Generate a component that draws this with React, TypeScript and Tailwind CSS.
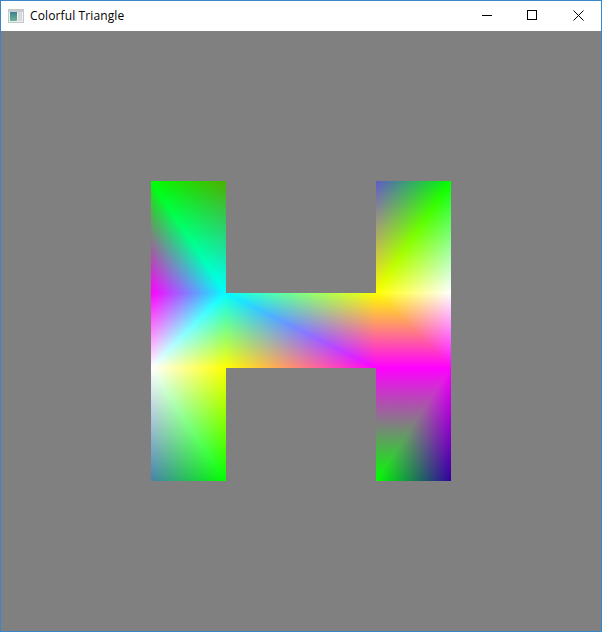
type V = { x: number; y: number; c: string };

const v = (x: number, y: number, c: string): V => ({ x, y, c });

const MAGENTA = "#ff00ff";
const CYAN = "#00ffff";
const YELLOW = "#ffff00";
const GREEN = "#00ff00";
const WHITE = "#ffffff";

// vertex coloured triangles, coordinates are relative to the H box
const triangles: V[][] = [
  // left top
  [v(0, 0, GREEN), v(75, 0, "#4bb000"), v(75, 112, CYAN)],
  [v(0, 0, GREEN), v(75, 112, CYAN), v(0, 112, MAGENTA)],
  // left middle
  [v(0, 112, MAGENTA), v(75, 112, CYAN), v(0, 187, WHITE)],
  [v(75, 112, CYAN), v(75, 187, YELLOW), v(0, 187, WHITE)],
  // left bottom
  [v(0, 187, WHITE), v(75, 187, YELLOW), v(75, 300, GREEN)],
  [v(0, 187, WHITE), v(75, 300, GREEN), v(0, 300, "#4682aa")],
  // bar
  [v(75, 112, CYAN), v(225, 112, YELLOW), v(225, 187, MAGENTA)],
  [v(75, 112, CYAN), v(225, 187, MAGENTA), v(75, 187, YELLOW)],
  // right middle
  [v(225, 112, YELLOW), v(300, 112, WHITE), v(300, 187, MAGENTA)],
  [v(225, 112, YELLOW), v(300, 187, MAGENTA), v(225, 187, MAGENTA)],
  // right top
  [v(225, 0, "#5f5ac8"), v(300, 0, GREEN), v(225, 112, YELLOW)],
  [v(300, 0, GREEN), v(300, 112, WHITE), v(225, 112, YELLOW)],
  // right bottom
  [v(225, 187, MAGENTA), v(300, 187, MAGENTA), v(225, 300, GREEN)],
  [v(300, 187, MAGENTA), v(300, 300, "#3200a0"), v(225, 300, GREEN)],
];

// gradient running from a vertex (full colour) to the foot on the opposite edge (black)
const foot = (p: V, a: V, b: V) => {
  const dx = b.x - a.x;
  const dy = b.y - a.y;
  const t = ((p.x - a.x) * dx + (p.y - a.y) * dy) / (dx * dx + dy * dy);
  return { x: a.x + t * dx, y: a.y + t * dy };
};

const ColoredH = () => {
  return (
    <svg width="300" height="300" viewBox="0 0 300 300" className="block isolate">
      <defs>
        {triangles.map((tri, i) =>
          tri.map((p, j) => {
            const f = foot(p, tri[(j + 1) % 3], tri[(j + 2) % 3]);
            return (
              <linearGradient
                key={`${i}-${j}`}
                id={`g${i}-${j}`}
                gradientUnits="userSpaceOnUse"
                x1={p.x}
                y1={p.y}
                x2={f.x}
                y2={f.y}
              >
                <stop offset="0" stopColor={p.c} />
                <stop offset="1" stopColor="#000000" />
              </linearGradient>
            );
          })
        )}
      </defs>
      {triangles.map((tri, i) =>
        tri.map((_, j) => (
          <polygon
            key={`${i}-${j}`}
            points={tri.map((q) => `${q.x},${q.y}`).join(" ")}
            fill={`url(#g${i}-${j})`}
            className="mix-blend-plus-lighter"
          />
        ))
      )}
    </svg>
  );
};

const AppIcon = () => {
  return (
    <svg width="16" height="16" viewBox="0 0 16 16" className="block">
      <defs>
        <linearGradient id="appIconFill" x1="0" y1="0" x2="0" y2="1">
          <stop offset="0" stopColor="#3d7f8c" />
          <stop offset="1" stopColor="#6fb596" />
        </linearGradient>
      </defs>
      <rect x="0.5" y="1.5" width="15" height="13" fill="#eef0f0" stroke="#c3c8ca" />
      <rect x="1" y="2" width="14" height="2" fill="#c6ccd0" />
      <rect x="2" y="4" width="7" height="9" fill="url(#appIconFill)" />
      <rect x="10" y="4" width="4" height="9" fill="#d5dadb" />
    </svg>
  );
};

const App = () => {
  return (
    <div className="w-[602px] h-[632px] flex flex-col border border-[#3a86c8] bg-white overflow-hidden">
      <div className="h-[30px] flex items-center justify-between bg-white shrink-0">
        <div className="flex items-center">
          <div className="ml-[7px]">
            <AppIcon />
          </div>
          <span className="ml-[6px] text-[12px] tracking-[0.12px] text-black font-['Open_Sans',sans-serif]">
            Colorful Triangle
          </span>
        </div>
        <div className="flex">
          <div className="w-[42px] h-[30px] flex items-start justify-center pt-[9px]">
            <svg width="10" height="10" viewBox="0 0 10 10">
              <path d="M0 5.5H10" stroke="#000" fill="none" />
            </svg>
          </div>
          <div className="w-[48px] h-[30px] flex items-start justify-center pt-[9px]">
            <svg width="10" height="10" viewBox="0 0 10 10">
              <rect x="0.5" y="0.5" width="9" height="9" stroke="#000" fill="none" />
            </svg>
          </div>
          <div className="w-[45px] h-[30px] flex items-start justify-center pt-[9px]">
            <svg width="11" height="11" viewBox="0 0 11 11">
              <path d="M0.5 0.5L10.5 10.5M10.5 0.5L0.5 10.5" stroke="#000" fill="none" />
            </svg>
          </div>
        </div>
      </div>
      <div className="flex-1 bg-[#808080] pl-[150px] pt-[150px]">
        <ColoredH />
      </div>
    </div>
  );
};

export default App;
